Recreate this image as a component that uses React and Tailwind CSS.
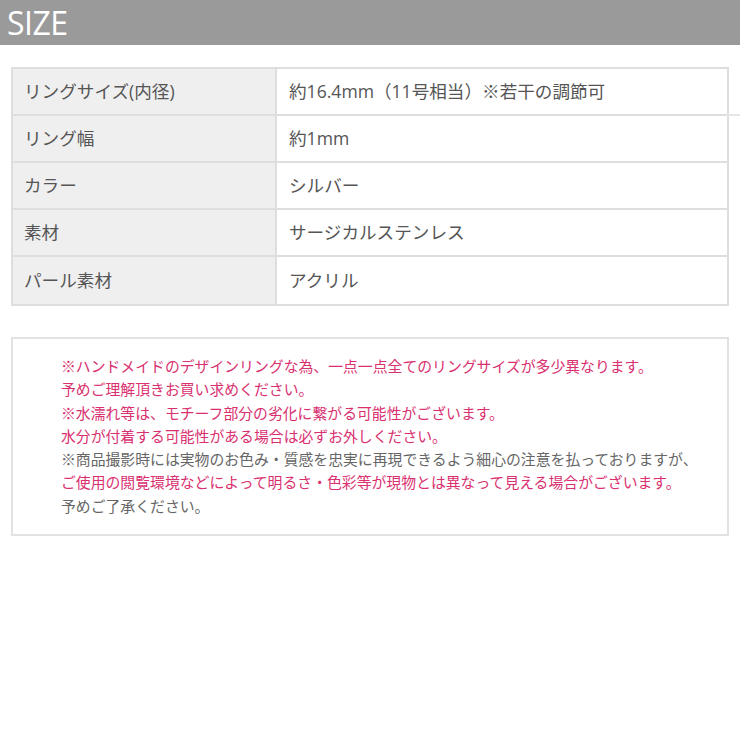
const rows = [
  ["リングサイズ(内径)", "約16.4mm（11号相当）※若干の調節可"],
  ["リング幅", "約1mm"],
  ["カラー", "シルバー"],
  ["素材", "サージカルステンレス"],
  ["パール素材", "アクリル"],
];

const notes = [
  ["pink", "※ハンドメイドのデザインリングな為、一点一点全てのリングサイズが多少異なります。"],
  ["pink", "予めご理解頂きお買い求めください。"],
  ["pink", "※水濡れ等は、モチーフ部分の劣化に繋がる可能性がございます。"],
  ["pink", "水分が付着する可能性がある場合は必ずお外しください。"],
  ["gray", "※商品撮影時には実物のお色み・質感を忠実に再現できるよう細心の注意を払っておりますが、"],
  ["pink", "ご使用の閲覧環境などによって明るさ・色彩等が現物とは異なって見える場合がございます。"],
  ["gray", "予めご了承ください。"],
];

export default function App() {
  return (
    <div
      className="w-[740px] h-[740px] bg-white overflow-hidden"
      style={{ fontFamily: '"Open Sans", "Noto Sans CJK JP", sans-serif' }}
    >
      <div className="h-[45px] bg-[#9a9a9a] flex items-center pl-[7px]">
        <span className="text-white text-[32px] leading-none tracking-[-0.5px]">SIZE</span>
      </div>

      <div className="relative mt-[22px] mx-[11px] border-2 border-[#dedede]">
        {rows.map(([label, value], i) => (
          <div
            key={label}
            className={`flex h-[47px] ${i < rows.length - 1 ? "border-b-2 border-[#dedede]" : ""}`}
          >
            <div className="w-[264px] bg-[#efefef] border-r-2 border-[#dedede] flex items-center pl-[11px] text-[17.6px] text-[#555]">
              {label}
            </div>
            <div className="flex-1 flex items-center pl-[12px] text-[17.6px] text-[#555]">
              {value}
            </div>
          </div>
        ))}
        <div className="absolute top-[45px] -right-[13px] w-[13px] h-[2px] bg-[#e6e6e6]" />
      </div>

      <div className="mt-[31px] mx-[11px] h-[199px] border-2 border-[#e2e2e2] pt-[16px] pl-[48px]">
        {notes.map(([tone, text]) => (
          <p
            key={text}
            className={`text-[14.85px] leading-[23.3px] ${
              tone === "pink" ? "text-[#d9306f]" : "text-[#666]"
            }`}
          >
            {text}
          </p>
        ))}
      </div>
    </div>
  );
}
